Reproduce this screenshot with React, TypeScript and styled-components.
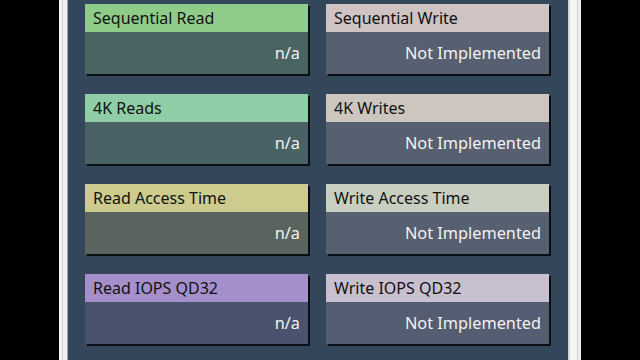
import React from "react";
import styled, { createGlobalStyle } from "styled-components";

const Global = createGlobalStyle`
  html, body { margin: 0; padding: 0; background: #000; }
  body { font-family: "Noto Sans", "Open Sans", sans-serif; }
`;

const Screen = styled.div`
  width: 640px;
  height: 360px;
  display: flex;
  overflow: hidden;
  background: #000;
`;

const Black = styled.div<{ $w: number }>`
  width: ${(p) => p.$w}px;
  flex: none;
  background: #000;
`;

const Frame = styled.div<{ $w: number; $bg: string }>`
  width: ${(p) => p.$w}px;
  flex: none;
  background: ${(p) => p.$bg};
`;

const Panel = styled.div`
  flex: 1;
  background: #34465a;
  padding: 4px 19px 0 17px;
  display: grid;
  grid-template-columns: 223px 223px;
  column-gap: 18px;
  row-gap: 20px;
  align-content: start;
`;

const Card = styled.div`
  display: flex;
  flex-direction: column;
  height: 70px;
  box-shadow: 2px 2px 0 #0b0f14;
`;

const Header = styled.div<{ $bg: string }>`
  height: 28px;
  background: ${(p) => p.$bg};
  color: #111;
  font-size: 16px;
  line-height: 28px;
  padding-left: 8px;
  white-space: nowrap;
`;

const Body = styled.div<{ $bg: string }>`
  flex: 1;
  background: ${(p) => p.$bg};
  color: #f2f2f2;
  font-size: 16.3px;
  display: flex;
  align-items: center;
  justify-content: flex-end;
  padding: 0 8px 0 0;
`;

const cards = [
  { label: "Sequential Read", value: "n/a", head: "#8fcc88", body: "#4a6464" },
  { label: "Sequential Write", value: "Not Implemented", head: "#cfc3c4", body: "#576070" },
  { label: "4K Reads", value: "n/a", head: "#8ecda6", body: "#4a6266" },
  { label: "4K Writes", value: "Not Implemented", head: "#cdc6bf", body: "#576070" },
  { label: "Read Access Time", value: "n/a", head: "#cdcb8e", body: "#5a645f" },
  { label: "Write Access Time", value: "Not Implemented", head: "#c9cfc0", body: "#576070" },
  { label: "Read IOPS QD32", value: "n/a", head: "#a48fcb", body: "#4b526e" },
  { label: "Write IOPS QD32", value: "Not Implemented", head: "#c8bfcf", body: "#555d72" },
];

export default function App() {
  return (
    <>
      <Global />
      <Screen>
        <Black $w={59} />
        <Frame $w={3} $bg="#f4f4f4" />
        <Frame $w={1} $bg="#cfcfcf" />
        <Frame $w={4} $bg="#f0f0f0" />
        <Frame $w={1} $bg="#9aa0a8" />
        <Panel>
          {cards.map((c) => (
            <Card key={c.label}>
              <Header $bg={c.head}>{c.label}</Header>
              <Body $bg={c.body}>{c.value}</Body>
            </Card>
          ))}
        </Panel>
        <Frame $w={2} $bg="#d8d8d8" />
        <Frame $w={7} $bg="#f6f6f6" />
        <Frame $w={1} $bg="#cfcfcf" />
        <Frame $w={3} $bg="#eeeeee" />
        <Black $w={59} />
      </Screen>
    </>
  );
}
